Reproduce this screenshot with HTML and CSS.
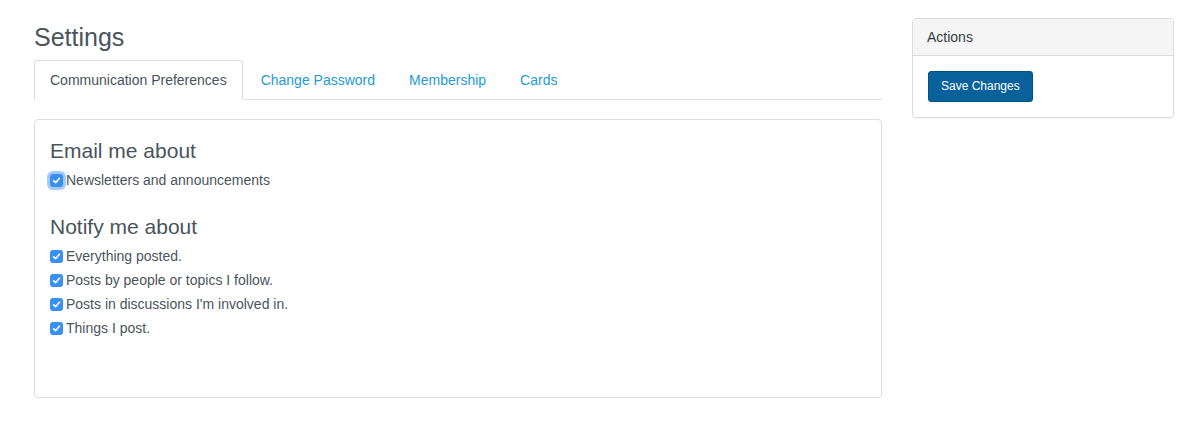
FILE: index.html
```html
<!DOCTYPE html>
<html lang="en">
<head>
<meta charset="utf-8">
<title>Settings</title>
<link rel="stylesheet" href="styles.css">
</head>
<body>
<div class="page">
  <main class="main">
    <h1 class="title">Settings</h1>
    <ul class="tabs">
      <li class="tab active"><a href="#">Communication Preferences</a></li>
      <li class="tab"><a href="#">Change Password</a></li>
      <li class="tab"><a href="#">Membership</a></li>
      <li class="tab"><a href="#">Cards</a></li>
    </ul>
    <section class="panel">
      <div class="group">
        <h3 class="group-title">Email me about</h3>
        <label class="check"><input type="checkbox" class="box focused" checked>Newsletters and announcements</label>
      </div>
      <div class="group">
        <h3 class="group-title">Notify me about</h3>
        <label class="check"><input type="checkbox" class="box" checked>Everything posted.</label>
        <label class="check"><input type="checkbox" class="box" checked>Posts by people or topics I follow.</label>
        <label class="check"><input type="checkbox" class="box" checked>Posts in discussions I'm involved in.</label>
        <label class="check"><input type="checkbox" class="box" checked>Things I post.</label>
      </div>
    </section>
  </main>
  <aside class="side">
    <div class="card">
      <div class="card-head">Actions</div>
      <div class="card-body">
        <button class="btn" type="button">Save Changes</button>
      </div>
    </div>
  </aside>
</div>
</body>
</html>
```

FILE: styles.css
```css
* { box-sizing: border-box; }
html, body { margin: 0; padding: 0; background: #fff; }
body {
  font-family: "Liberation Sans", Arial, Helvetica, sans-serif;
  font-size: 14px;
  line-height: 20px;
  color: #4a545b;
}
.page {
  display: flex;
  gap: 30px;
  padding: 18px 29px 0 34px;
}
.main { flex: 1; min-width: 0; }
.side { width: 262px; flex: none; }

.title {
  margin: 4px 0 8px;
  font-size: 25px;
  line-height: 30px;
  font-weight: normal;
  color: #4a545b;
}

.tabs {
  list-style: none;
  margin: 0;
  padding: 0;
  display: flex;
  border-bottom: 1px solid #dddddd;
}
.tab { margin: 0 2px -1px 0; }
.tab a {
  display: block;
  padding: 9px 15px;
  line-height: 20px;
  border: 1px solid transparent;
  border-radius: 4px 4px 0 0;
  color: #259ad6;
  text-decoration: none;
}
.tab.active a {
  color: #4a545b;
  background: #fff;
  border-color: #dddddd #dddddd transparent;
}

.panel {
  margin-top: 19px;
  border: 1px solid #dddddd;
  border-radius: 4px;
  padding: 19px 15px 59px;
}
.group + .group { margin-top: 25px; }
.group-title {
  margin: 0 0 8px;
  font-size: 21px;
  line-height: 23px;
  font-weight: normal;
  color: #4a545b;
}
.check {
  display: flex;
  align-items: center;
  line-height: 20px;
  margin-bottom: 4px;
}
.group .check:last-child { margin-bottom: 0; }
.box {
  appearance: none;
  -webkit-appearance: none;
  width: 13px;
  height: 13px;
  margin: 0 3px 0 0;
  border-radius: 3px;
  background-color: #3a8ff2;
  background-image: url("data:image/svg+xml,%3Csvg xmlns='http://www.w3.org/2000/svg' viewBox='0 0 13 13'%3E%3Cpath d='M3.6 6.8 L5.6 8.7 L9.4 4.3' fill='none' stroke='white' stroke-width='1.6' stroke-linecap='round' stroke-linejoin='round'/%3E%3C/svg%3E");
  background-size: 13px 13px;
  flex: none;
}
.box.focused { box-shadow: 0 0 0 3px rgba(90, 160, 250, 0.55); }

.card {
  border: 1px solid #dddddd;
  border-radius: 4px;
  box-shadow: 0 1px 1px rgba(0, 0, 0, 0.05);
  overflow: hidden;
}
.card-head {
  background: #f5f5f5;
  border-bottom: 1px solid #dddddd;
  padding: 9px 14px 8px;
  line-height: 19px;
  color: #333c42;
}
.card-body { padding: 15px; }
.btn {
  font-family: inherit;
  font-size: 12px;
  line-height: 17px;
  padding: 6px 12px;
  color: #fff;
  background: #08619a;
  border: 1px solid #054f80;
  border-radius: 3px;
  cursor: pointer;
}
```
